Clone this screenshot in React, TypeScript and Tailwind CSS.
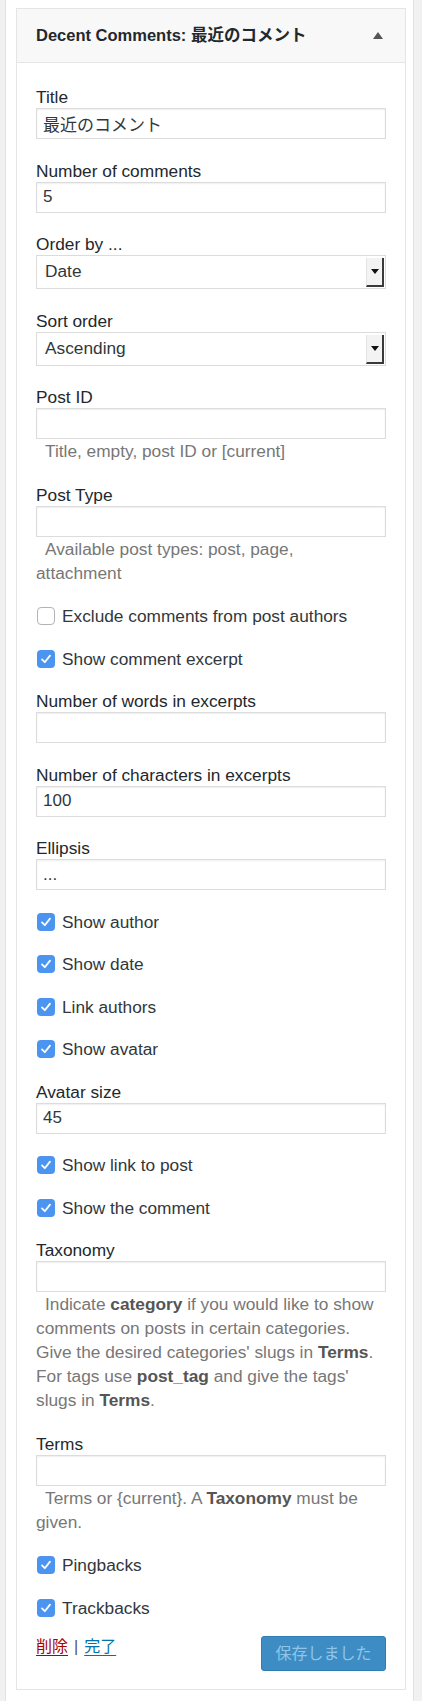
import React from 'react';

const FONT = "font-['Liberation_Sans','Noto_Sans_CJK_JP',sans-serif]";

// plain text box, WP widget style
function TextField({ label, value = '', help }: { label: string; value?: string; help?: React.ReactNode }) {
  return (
    <div className="flex flex-col">
      <span className="leading-[22px] text-[#23282d]">{label}</span>
      <input
        readOnly
        defaultValue={value}
        className={`${FONT} h-[31px] w-full border border-[#dcdcdc] bg-white px-[6px] text-[17px] text-[#32373c] shadow-[inset_0_1px_2px_rgba(0,0,0,0.07)] outline-none`}
      />
      {help && <p className="indent-[9px] text-[17.3px] leading-[24px] text-[#777]">{help}</p>}
    </div>
  );
}

function SelectField({ label, value }: { label: string; value: string }) {
  return (
    <div className="flex flex-col">
      <span className="leading-[22px] text-[#23282d]">{label}</span>
      <div className="flex h-[34px] w-full border border-[#dcdcdc] bg-white">
        <span className="flex flex-1 items-center pl-[8px] text-[#32373c]">{value}</span>
        <div className="mt-[2px] mb-[1px] mr-[1px] flex w-[18px] items-center justify-center border-l border-l-[#e4e4e4] border-r-2 border-b-2 border-r-[#3a3a3a] border-b-[#3a3a3a] bg-[#f3f3f3]">
          <svg width="8" height="5" viewBox="0 0 8 5">
            <polygon points="0,0 8,0 4,5" fill="#111" />
          </svg>
        </div>
      </div>
    </div>
  );
}

function Check({ label, checked = true }: { label: string; checked?: boolean }) {
  return (
    <div className="flex h-[22px] items-center gap-[7px] pl-[1px]">
      {checked ? (
        <span className="flex h-[18px] w-[18px] items-center justify-center rounded-[4px] bg-[#4b95f0]">
          <svg width="18" height="18" viewBox="0 0 18 18">
            <path d="M5 9.4 L7.8 12.2 L13 5.6" fill="none" stroke="#fff" strokeWidth="1.8" strokeLinecap="round" strokeLinejoin="round" />
          </svg>
        </span>
      ) : (
        <span className="h-[18px] w-[18px] rounded-[4px] border border-[#b4b4b4] bg-white" />
      )}
      <span className="leading-[22px] text-[#32373c]">{label}</span>
    </div>
  );
}

const B = ({ children }: { children: React.ReactNode }) => (
  <b className="font-bold text-[#555]">{children}</b>
);

export default function App() {
  return (
    <div className={`${FONT} flex min-h-[1701px] w-[422px] bg-[#f1f1f1] text-[17.3px]`}>
      <div className="ml-[5px] w-[409px] border-x border-[#e2e2e2] bg-white pt-[8px] pb-[11px] pl-[10px]">
        <div className="w-[390px] border border-[#e5e5e5] bg-white">
          {/* widget header */}
          <div className="flex h-[54px] items-center justify-between border-b border-[#e5e5e5] bg-[#f8f8f8] pl-[19px] pr-[22px]">
            <h3 className="text-[16.5px] font-bold text-[#23282d]">Decent Comments: 最近のコメント</h3>
            <svg width="10" height="7" viewBox="0 0 10 7">
              <polygon points="5,0 10,7 0,7" fill="#555" />
            </svg>
          </div>

          <div className="px-[19px] pt-[23px] pb-[18px]">
            <div className="flex flex-col gap-[20.5px]">
              <TextField label="Title" value="最近のコメント" />
              <TextField label="Number of comments" value="5" />
              <SelectField label="Order by ..." value="Date" />
              <SelectField label="Sort order" value="Ascending" />
              <TextField label="Post ID" help="Title, empty, post ID or [current]" />
              <TextField
                label="Post Type"
                help={
                  <>
                    Available post types: post, page,
                    <br />
                    attachment
                  </>
                }
              />
              <Check label="Exclude comments from post authors" checked={false} />
              <Check label="Show comment excerpt" />
              <TextField label="Number of words in excerpts" />
              <TextField label="Number of characters in excerpts" value="100" />
              <TextField label="Ellipsis" value="..." />
              <Check label="Show author" />
              <Check label="Show date" />
              <Check label="Link authors" />
              <Check label="Show avatar" />
              <TextField label="Avatar size" value="45" />
              <Check label="Show link to post" />
              <Check label="Show the comment" />
              <TextField
                label="Taxonomy"
                help={
                  <>
                    Indicate <B>category</B> if you would like to show
                    <br />
                    comments on posts in certain categories.
                    <br />
                    Give the desired categories' slugs in <B>Terms</B>.
                    <br />
                    For tags use <B>post_tag</B> and give the tags'
                    <br />
                    slugs in <B>Terms</B>.
                  </>
                }
              />
              <TextField
                label="Terms"
                help={
                  <>
                    Terms or {'{current}'}. A <B>Taxonomy</B> must be
                    <br />
                    given.
                  </>
                }
              />
              <Check label="Pingbacks" />
              <Check label="Trackbacks" />
            </div>

            {/* footer actions */}
            <div className="mt-[17.5px] flex items-start justify-between">
              <div className="flex items-center gap-[6px] text-[16px] leading-[22px]">
                <a className="text-[#a00] underline underline-offset-[3px]">削除</a>
                <span className="text-[#555]">|</span>
                <a className="text-[#0073aa] underline underline-offset-[3px]">完了</a>
              </div>
              <button className="h-[35px] w-[125px] rounded-[3px] border border-[#2f7db3] bg-[#3d8dc4] text-[16px] text-[#8fc6e8]">
                保存しました
              </button>
            </div>
          </div>
        </div>
      </div>
    </div>
  );
}
